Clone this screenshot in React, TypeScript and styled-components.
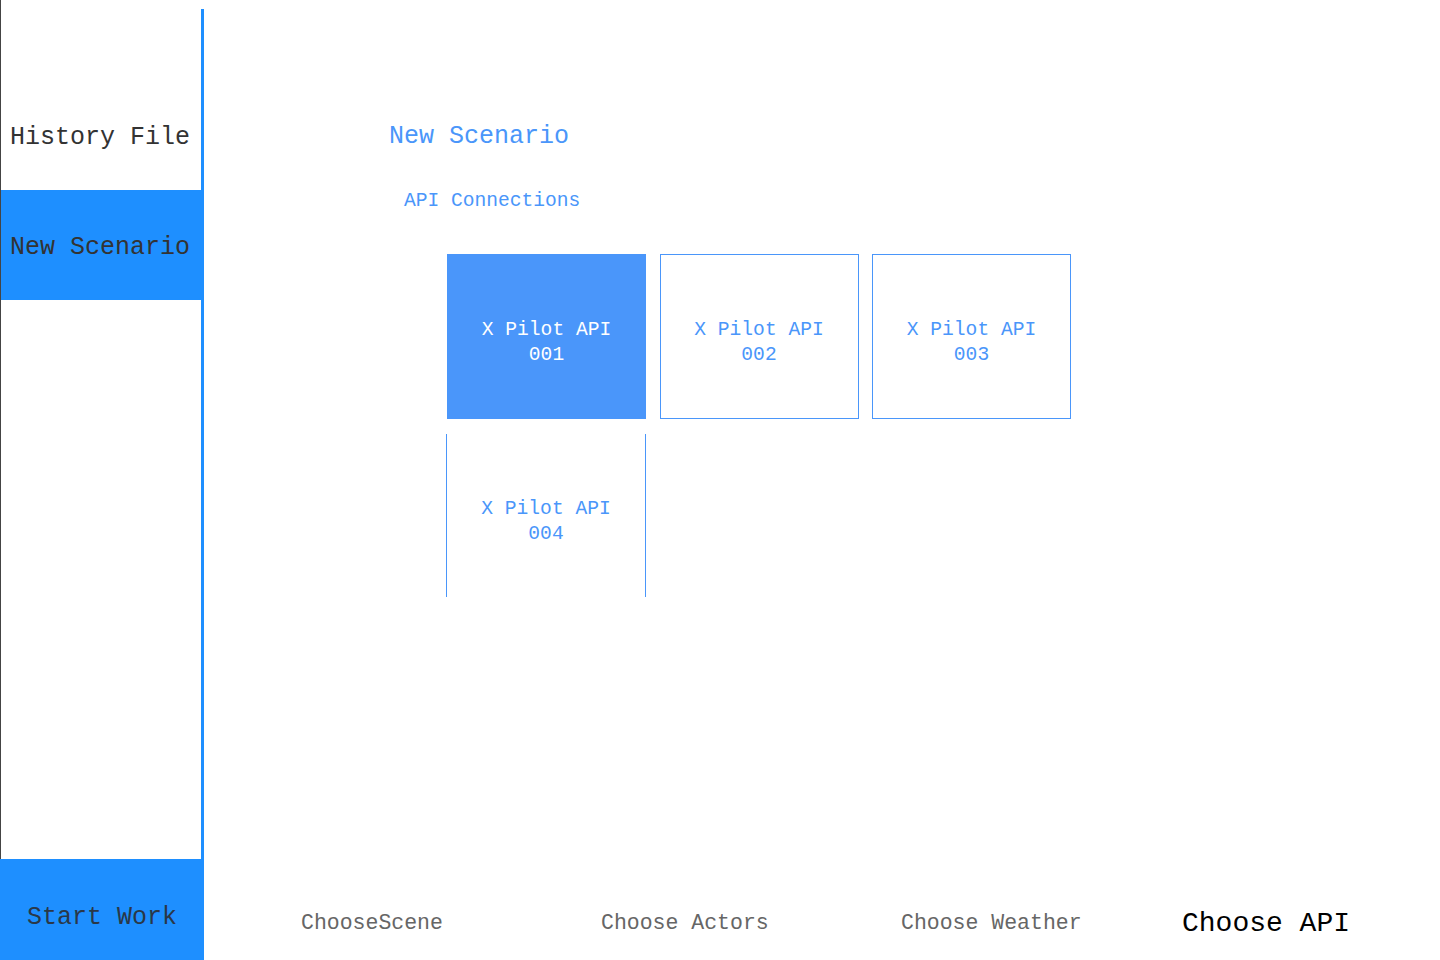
import React, { FC, useState } from 'react';
import styled, { createGlobalStyle } from 'styled-components';

const GlobalStyle = createGlobalStyle`
  html, body {
    margin: 0;
    padding: 0;
    background: #ffffff;
  }
  body {
    font-family: 'Liberation Mono', 'DejaVu Sans Mono', monospace;
  }
`;

const Page = styled.div`
  display: flex;
  height: 960px;
  width: 1440px;
  overflow: hidden;
`;

const Sidebar = styled.aside`
  display: flex;
  flex-direction: column;
  width: 204px;
  flex-shrink: 0;
  border-left: 1px solid #444;
  box-sizing: border-box;
`;

const SideNav = styled.nav`
  flex: 1;
  display: flex;
  flex-direction: column;
  margin-top: 9px;
  padding-top: 71px;
  border-right: 3px solid #1e8fff;
`;

const SideItem = styled.div<{ $active?: boolean }>`
  height: 110px;
  box-sizing: border-box;
  display: flex;
  align-items: center;
  padding: 4px 0 0 9px;
  font-size: 25px;
  color: #333333;
  background: ${(p) => (p.$active ? '#1e8fff' : 'transparent')};
  margin-right: ${(p) => (p.$active ? '-3px' : '0')};
  cursor: pointer;
`;

const StartButton = styled.button`
  height: 101px;
  width: 204px;
  margin-left: -1px;
  border: none;
  background: #1e8fff;
  color: #2a3848;
  font-family: inherit;
  font-size: 25px;
  padding: 16px 0 0 0;
  cursor: pointer;
`;

const Main = styled.main`
  flex: 1;
  display: flex;
  flex-direction: column;
`;

const Content = styled.section`
  flex: 1;
  padding: 122px 0 0 185px;
`;

const Heading = styled.h1`
  margin: 0;
  font-size: 25px;
  font-weight: normal;
  line-height: 30px;
  color: #4a96fa;
`;

const SubHeading = styled.h2`
  margin: 37px 0 0 15px;
  font-size: 19.6px;
  font-weight: normal;
  line-height: 24px;
  color: #4a96fa;
`;

const CardGrid = styled.div`
  display: grid;
  grid-template-columns: repeat(3, 199px);
  column-gap: 13.5px;
  row-gap: 15px;
  margin: 41px 0 0 58px;
`;

const Card = styled.div<{ $selected?: boolean; $open?: boolean }>`
  height: 165px;
  box-sizing: border-box;
  display: flex;
  flex-direction: column;
  align-items: center;
  justify-content: center;
  padding-top: 12px;
  font-size: 19.6px;
  line-height: 25px;
  color: ${(p) => (p.$selected ? '#ffffff' : '#4a96fa')};
  background: ${(p) => (p.$selected ? '#4a96fa' : '#ffffff')};
  border: 1px solid #4a96fa;
  ${(p) => (p.$open ? 'border-top: none; border-bottom: none; height: 163px; margin-left: -1px;' : '')}
  cursor: pointer;
`;

const TabBar = styled.div`
  height: 76px;
  display: flex;
  align-items: center;
  padding-top: 2px;
  box-sizing: border-box;
`;

const Tab = styled.div<{ $active?: boolean }>`
  width: 300px;
  flex-shrink: 0;
  padding-left: ${(p) => (p.$active ? '78px' : '97px')};
  box-sizing: border-box;
  font-size: ${(p) => (p.$active ? '28px' : '21.5px')};
  color: ${(p) => (p.$active ? '#000000' : '#666666')};
  white-space: nowrap;
  cursor: pointer;
`;

const apis = ['001', '002', '003', '004'];
const tabs = ['ChooseScene', 'Choose Actors', 'Choose Weather', 'Choose API'];

const App: FC = () => {
  const [selected, setSelected] = useState('001');

  return (
    <Page>
      <GlobalStyle />
      <Sidebar>
        <SideNav>
          <SideItem>History File</SideItem>
          <SideItem $active>New Scenario</SideItem>
        </SideNav>
        <StartButton>Start Work</StartButton>
      </Sidebar>
      <Main>
        <Content>
          <Heading>New Scenario</Heading>
          <SubHeading>API Connections</SubHeading>
          <CardGrid>
            {apis.map((id) => (
              <Card
                key={id}
                $selected={selected === id}
                $open={id === '004'}
                onClick={() => setSelected(id)}
              >
                <span>X Pilot API</span>
                <span>{id}</span>
              </Card>
            ))}
          </CardGrid>
        </Content>
        <TabBar>
          {tabs.map((t) => (
            <Tab key={t} $active={t === 'Choose API'}>
              {t}
            </Tab>
          ))}
        </TabBar>
      </Main>
    </Page>
  );
};

export default App;
